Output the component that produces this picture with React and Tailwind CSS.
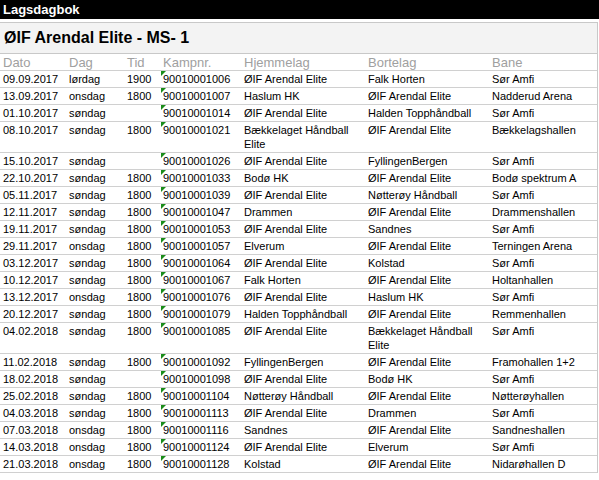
import React from "react";

const rows = [
  ["09.09.2017", "lørdag", "1900", "90010001006", "ØIF Arendal Elite", "Falk Horten", "Sør Amfi"],
  ["13.09.2017", "onsdag", "1800", "90010001007", "Haslum HK", "ØIF Arendal Elite", "Nadderud Arena"],
  ["01.10.2017", "søndag", "", "90010001014", "ØIF Arendal Elite", "Halden Topphåndball", "Sør Amfi"],
  ["08.10.2017", "søndag", "1800", "90010001021", "Bækkelaget Håndball Elite", "ØIF Arendal Elite", "Bækkelagshallen"],
  ["15.10.2017", "søndag", "", "90010001026", "ØIF Arendal Elite", "FyllingenBergen", "Sør Amfi"],
  ["22.10.2017", "søndag", "1800", "90010001033", "Bodø HK", "ØIF Arendal Elite", "Bodø spektrum A"],
  ["05.11.2017", "søndag", "1800", "90010001039", "ØIF Arendal Elite", "Nøtterøy Håndball", "Sør Amfi"],
  ["12.11.2017", "søndag", "1800", "90010001047", "Drammen", "ØIF Arendal Elite", "Drammenshallen"],
  ["19.11.2017", "søndag", "1800", "90010001053", "ØIF Arendal Elite", "Sandnes", "Sør Amfi"],
  ["29.11.2017", "onsdag", "1800", "90010001057", "Elverum", "ØIF Arendal Elite", "Terningen Arena"],
  ["03.12.2017", "søndag", "1800", "90010001064", "ØIF Arendal Elite", "Kolstad", "Sør Amfi"],
  ["10.12.2017", "søndag", "1800", "90010001067", "Falk Horten", "ØIF Arendal Elite", "Holtanhallen"],
  ["13.12.2017", "onsdag", "1800", "90010001076", "ØIF Arendal Elite", "Haslum HK", "Sør Amfi"],
  ["20.12.2017", "søndag", "1800", "90010001079", "Halden Topphåndball", "ØIF Arendal Elite", "Remmenhallen"],
  ["04.02.2018", "søndag", "1800", "90010001085", "ØIF Arendal Elite", "Bækkelaget Håndball Elite", "Sør Amfi"],
  ["11.02.2018", "søndag", "1800", "90010001092", "FyllingenBergen", "ØIF Arendal Elite", "Framohallen 1+2"],
  ["18.02.2018", "søndag", "", "90010001098", "ØIF Arendal Elite", "Bodø HK", "Sør Amfi"],
  ["25.02.2018", "søndag", "1800", "90010001104", "Nøtterøy Håndball", "ØIF Arendal Elite", "Nøtterøyhallen"],
  ["04.03.2018", "søndag", "1800", "90010001113", "ØIF Arendal Elite", "Drammen", "Sør Amfi"],
  ["07.03.2018", "onsdag", "1800", "90010001116", "Sandnes", "ØIF Arendal Elite", "Sandneshallen"],
  ["14.03.2018", "onsdag", "1800", "90010001124", "ØIF Arendal Elite", "Elverum", "Sør Amfi"],
  ["21.03.2018", "onsdag", "1800", "90010001128", "Kolstad", "ØIF Arendal Elite", "Nidarøhallen D"],
];

const headers = ["Dato", "Dag", "Tid", "Kampnr.", "Hjemmelag", "Bortelag", "Bane"];

export default function App() {
  return (
    <div className="w-[599px] h-[480px] bg-white overflow-hidden font-['Liberation_Sans',Arial,sans-serif] text-black">
      <div className="h-[19px] bg-black text-white font-bold text-[13px] leading-[19px] pl-[3px]">
        Lagsdagbok
      </div>
      <div className="w-[598px] mt-[3px] border-r border-[#c8c8c8]">
        <div className="h-[32px] bg-[#f3f3f3] border-t border-b border-[#c8c8c8] flex items-center pl-[4px] text-[16px] font-bold">
          ØIF Arendal Elite - MS- 1
        </div>
        <table className="w-full table-fixed border-collapse">
          <colgroup>
            <col className="w-[66px]" />
            <col className="w-[58px]" />
            <col className="w-[36px]" />
            <col className="w-[81px]" />
            <col className="w-[124px]" />
            <col className="w-[124px]" />
            <col />
          </colgroup>
          <thead>
            <tr className="border-b border-[#d0d0d0]">
              {headers.map((h) => (
                <th
                  key={h}
                  className="text-left font-normal text-[13px] leading-[15px] text-[#a0a0a0] pl-[3px] pt-[1px] pb-0 align-top"
                >
                  {h}
                </th>
              ))}
            </tr>
          </thead>
          <tbody>
            {rows.map((r, i) => (
              <tr key={i} className="border-b border-[#d0d0d0] text-[11px] leading-[14px]">
                {r.map((c, j) => (
                  <td key={j} className={"align-top py-[1px] pl-[3px] pr-[2px] " + (j === 3 ? "relative" : "")}>
                    {j === 3 && (
                      <span className="absolute left-[1px] top-0 w-0 h-0 border-t-[5px] border-r-[5px] border-t-[#1a8c1a] border-r-transparent" />
                    )}
                    {c}
                  </td>
                ))}
              </tr>
            ))}
          </tbody>
        </table>
      </div>
    </div>
  );
}
